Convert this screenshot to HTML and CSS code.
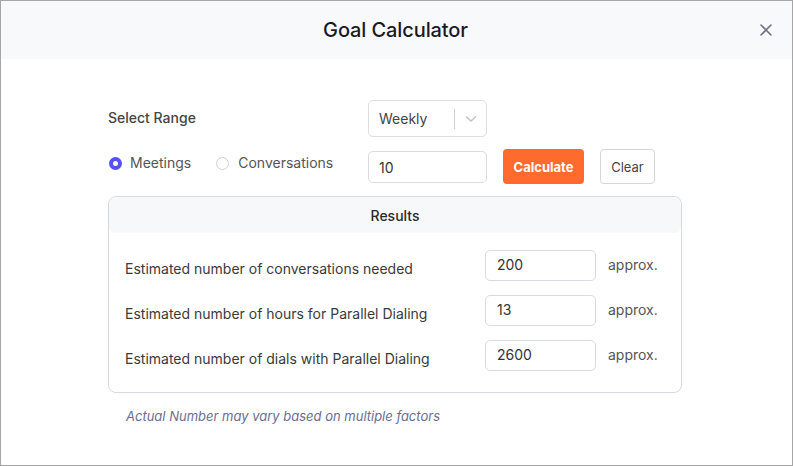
FILE: index.html
```html
<!DOCTYPE html>
<html>
<head>
<meta charset="utf-8">
<link rel="stylesheet" href="styles.css">
</head>
<body>
<div class="modal">
  <header class="modal-header">
    <h1 class="title">Goal Calculator</h1>
    <button class="close" aria-label="Close">
      <svg width="14" height="14" viewBox="0 0 14 14"><path d="M2 2 L12 12 M12 2 L2 12" stroke="#6b7280" stroke-width="1.6" stroke-linecap="round"/></svg>
    </button>
  </header>
  <main class="content">
    <div class="form-row row-range">
      <div class="label-col"><span class="field-label">Select Range</span></div>
      <div class="select">
        <span class="select-value">Weekly</span>
        <span class="select-sep"></span>
        <span class="select-arrow">
          <svg width="12" height="8" viewBox="0 0 12 8"><path d="M1 1.5 L6 6 L11 1.5" fill="none" stroke="#c4c4c4" stroke-width="1.6"/></svg>
        </span>
      </div>
    </div>
    <div class="form-row row-goal">
      <div class="label-col radios">
        <label class="radio"><span class="radio-dot checked"></span>Meetings</label>
        <label class="radio"><span class="radio-dot"></span>Conversations</label>
      </div>
      <div class="input goal-input">10</div>
      <button class="btn btn-primary">Calculate</button>
      <button class="btn btn-default">Clear</button>
    </div>
    <section class="results">
      <div class="results-header">Results</div>
      <div class="results-body">
        <div class="result-row">
          <span class="result-label">Estimated number of conversations needed</span>
          <div class="input result-input">200</div>
          <span class="approx">approx.</span>
        </div>
        <div class="result-row">
          <span class="result-label">Estimated number of hours for Parallel Dialing</span>
          <div class="input result-input">13</div>
          <span class="approx">approx.</span>
        </div>
        <div class="result-row">
          <span class="result-label">Estimated number of dials with Parallel Dialing</span>
          <div class="input result-input">2600</div>
          <span class="approx">approx.</span>
        </div>
      </div>
    </section>
    <p class="note">Actual Number may vary based on multiple factors</p>
  </main>
</div>
</body>
</html>
```

FILE: styles.css
```css
* { box-sizing: border-box; }
html, body { margin: 0; padding: 0; }
body {
  font-family: Inter, "Noto Sans", Arial, sans-serif;
  color: #333;
  background: #fff;
}
.modal {
  width: 793px;
  height: 466px;
  border: 1px solid #a6a6a6;
  background: #fff;
  display: flex;
  flex-direction: column;
}
.modal-header {
  height: 58px;
  background: #f8f9fb;
  display: flex;
  align-items: center;
  justify-content: center;
  position: relative;
}
.title {
  margin: 0 0 0 -2px;
  font-size: 20px;
  font-weight: 500;
  color: #1b1b1f;
  letter-spacing: -0.1px;
}
.close {
  position: absolute;
  right: 19px;
  top: 22px;
  width: 14px;
  height: 14px;
  padding: 0;
  border: 0;
  background: none;
  display: flex;
}
.content {
  padding: 41px 0 0 107px;
}
.form-row {
  display: flex;
  align-items: center;
}
.label-col {
  width: 260px;
}
.field-label {
  display: block;
  font-size: 14px;
  font-weight: 500;
  color: #454545;
  padding-bottom: 3px;
}
.row-range { height: 37px; }
.select {
  width: 119px;
  height: 37px;
  border: 1px solid #dcdee3;
  border-radius: 5px;
  display: flex;
  align-items: center;
  padding-left: 10px;
}
.select-value {
  font-size: 14px;
  color: #444;
  width: 75px;
}
.select-sep {
  width: 1px;
  height: 20px;
  background: #cfcfcf;
}
.select-arrow {
  flex: 1;
  display: flex;
  justify-content: center;
  padding-top: 1px;
}
.row-goal {
  margin-top: 12px;
  height: 35px;
}
.radios {
  display: flex;
  gap: 24px;
  align-self: flex-start;
  padding-top: 4px;
}
.radio {
  display: flex;
  align-items: center;
  gap: 9px;
  font-size: 14px;
  color: #555;
  line-height: 20px;
}
.radio-dot {
  width: 13px;
  height: 13px;
  border-radius: 50%;
  border: 1px solid #cfd1d6;
  margin-left: 1px;
}
.radio-dot.checked {
  border: 4px solid #5551f2;
  background: #fff;
}
.radio:first-child { gap: 8px; }
.input {
  border: 1px solid #d9dbe0;
  border-radius: 5px;
  font-size: 14px;
  color: #333;
  display: flex;
  align-items: center;
  padding-left: 11px;
}
.goal-input {
  width: 119px;
  height: 32px;
  padding-left: 10px;
  padding-top: 2px;
}
.btn {
  font-family: Inter, "Noto Sans", Arial, sans-serif;
  font-size: 13px;
  height: 35px;
  border-radius: 4px;
  padding: 0;
  cursor: pointer;
}
.btn-primary {
  margin-left: 16px;
  width: 81px;
  background: #ff6b2d;
  border: 0;
  color: #fff;
  font-weight: 700;
}
.btn-default {
  margin-left: 16px;
  width: 55px;
  background: #fff;
  border: 1px solid #d4d6db;
  color: #454545;
  font-weight: 400;
}
.results {
  margin-top: 12px;
  width: 574px;
  height: 197px;
  border: 1px solid #d6d9de;
  border-radius: 8px;
}
.results-header {
  height: 36px;
  background: #f7f8fa;
  border-radius: 7px 7px 6px 6px;
  display: flex;
  align-items: center;
  justify-content: center;
  font-size: 14px;
  font-weight: 500;
  color: #2a2a2a;
}
.results-body {
  padding: 17px 0 0 16px;
  display: flex;
  flex-direction: column;
  gap: 14px;
}
.result-row {
  display: grid;
  grid-template-columns: 360px 111px auto;
  align-items: start;
}
.result-label {
  font-size: 14px;
  line-height: 20px;
  color: #3a3a3a;
  margin-top: 9px;
}
.result-input {
  height: 31px;
  padding-bottom: 2px;
}
.approx {
  font-size: 14px;
  color: #555;
  line-height: 20px;
  margin: 5px 0 0 12px;
}
.note {
  margin: 15px 0 0 18px;
  font-size: 13px;
  font-style: italic;
  color: #6b6d92;
}
```
